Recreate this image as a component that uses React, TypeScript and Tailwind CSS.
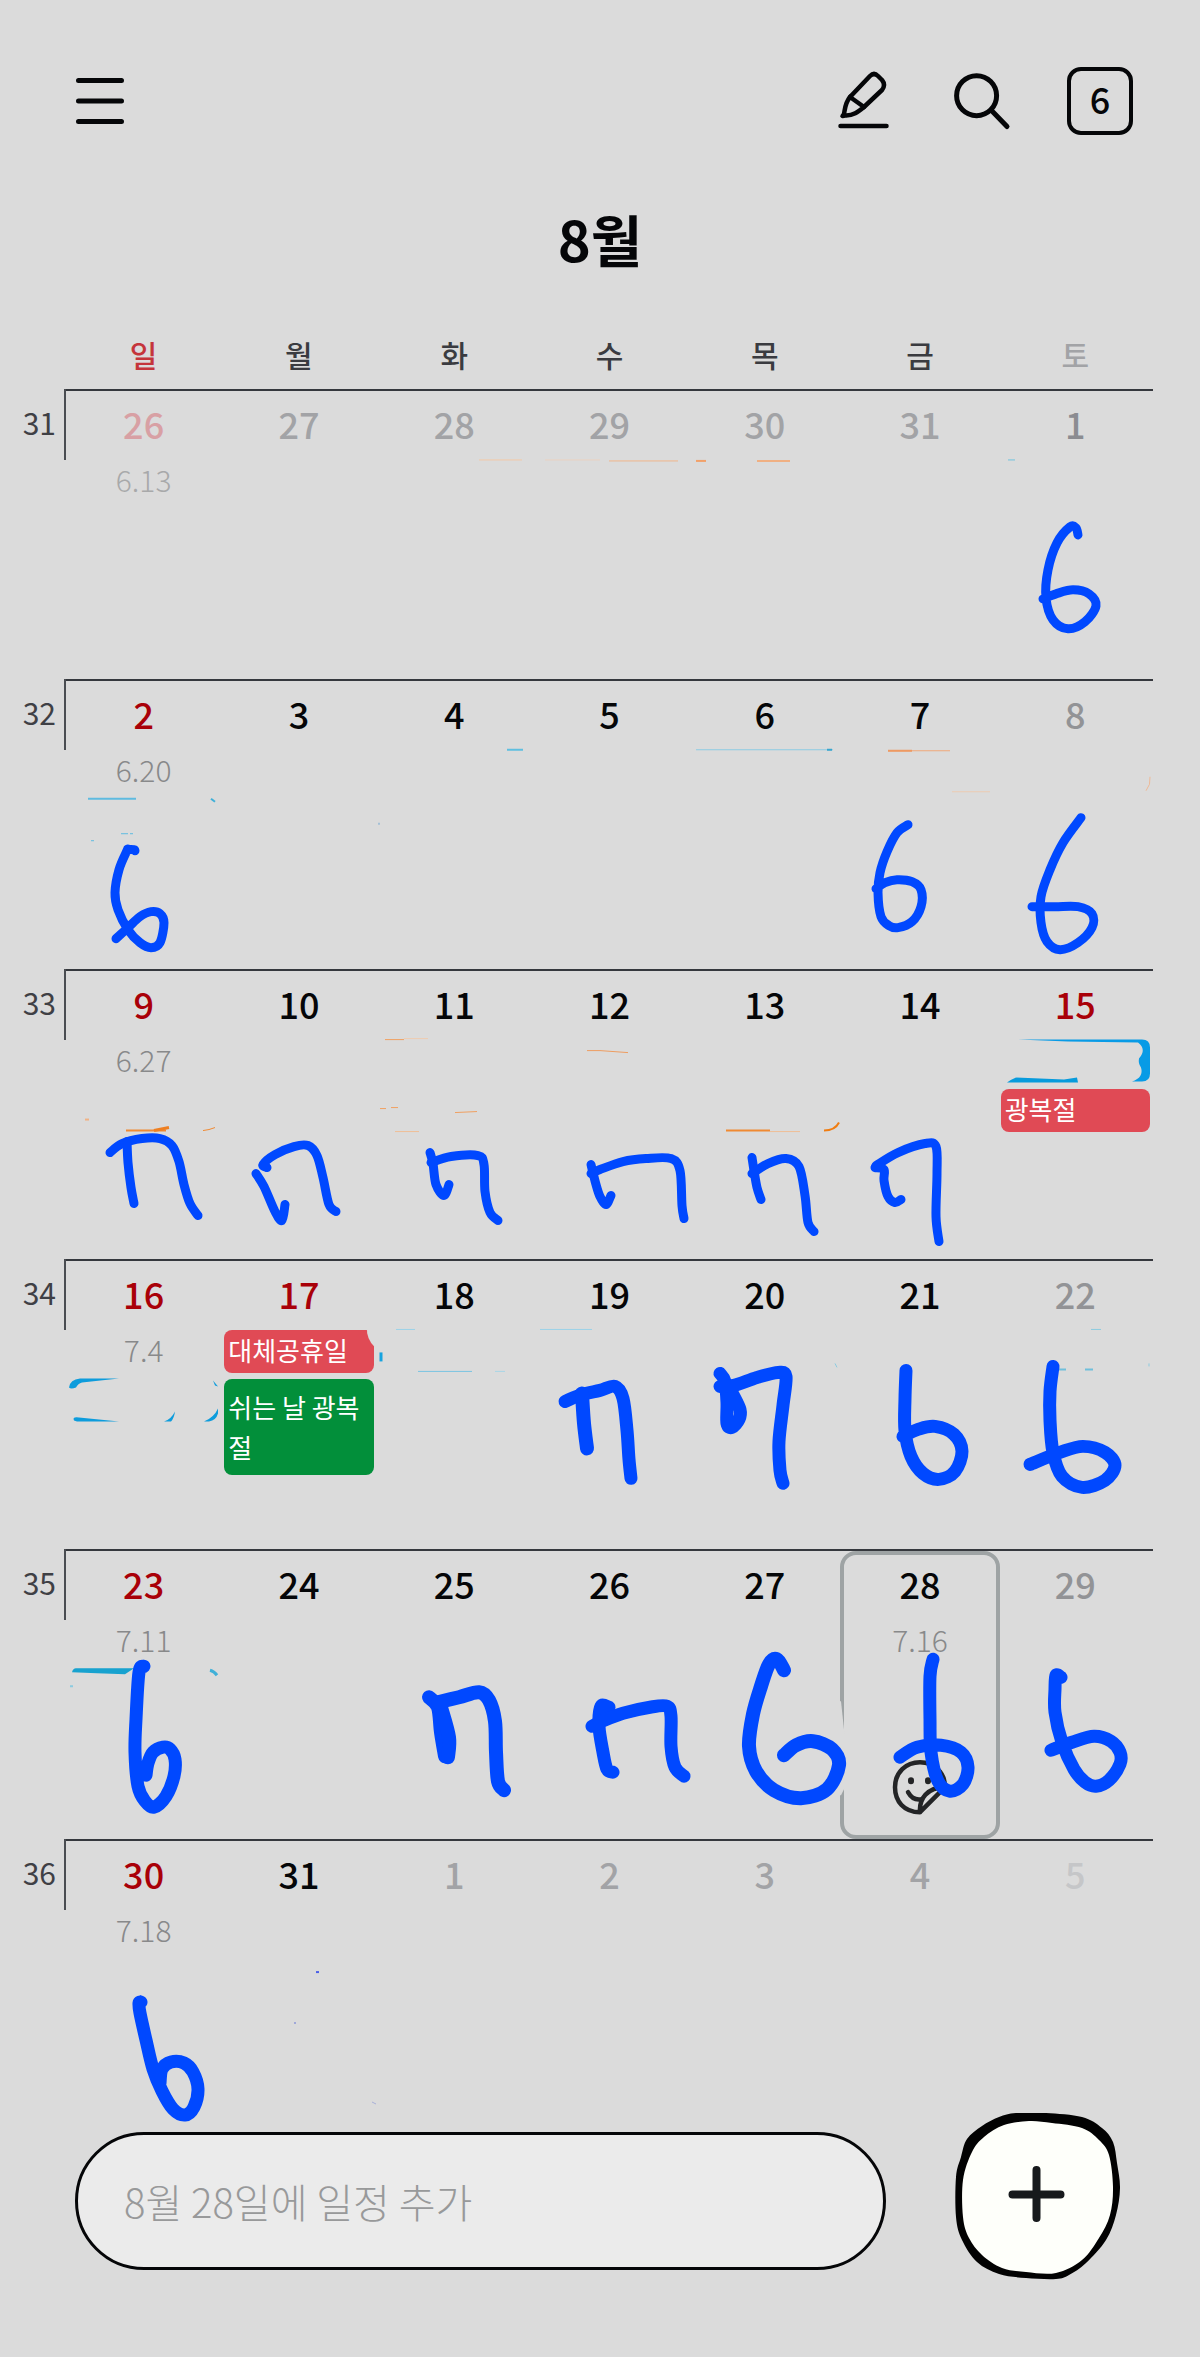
import clsx from "clsx";

type Point = [number, number];

type CalendarEvent = { title?: string; className?: string };

type Day = {
  date: number;
  tone: string;
  lunar?: string;
  lunarTone?: string;
  selected?: boolean;
  events?: CalendarEvent[];
};

type Week = { week: number; days: Day[] };

const BLACK = "text-[#050608]";
const RED = "text-[#a90008]";
const SATURDAY = "text-[#929396]";
const OTHER = "text-[#a2a3a6]";
const LUNAR = "text-[#88898a]";

const weekdays = [
  { name: "일", tone: "text-[#c5353b]" },
  { name: "월", tone: "text-[#3a3b40]" },
  { name: "화", tone: "text-[#3a3b40]" },
  { name: "수", tone: "text-[#3a3b40]" },
  { name: "목", tone: "text-[#3a3b40]" },
  { name: "금", tone: "text-[#3a3b40]" },
  { name: "토", tone: "text-[#a2a3a6]" },
];

const weeks: Week[] = [
  {
    week: 31,
    days: [
      { date: 26, tone: "text-[#d8a0a4]", lunar: "6.13", lunarTone: "text-[#a8a9aa]" },
      { date: 27, tone: OTHER },
      { date: 28, tone: OTHER },
      { date: 29, tone: OTHER },
      { date: 30, tone: OTHER },
      { date: 31, tone: OTHER },
      { date: 1, tone: "text-[#8b8c91]" },
    ],
  },
  {
    week: 32,
    days: [
      { date: 2, tone: RED, lunar: "6.20" },
      { date: 3, tone: BLACK },
      { date: 4, tone: BLACK },
      { date: 5, tone: BLACK },
      { date: 6, tone: BLACK },
      { date: 7, tone: BLACK },
      { date: 8, tone: SATURDAY },
    ],
  },
  {
    week: 33,
    days: [
      { date: 9, tone: RED, lunar: "6.27" },
      { date: 10, tone: BLACK },
      { date: 11, tone: BLACK },
      { date: 12, tone: BLACK },
      { date: 13, tone: BLACK },
      { date: 14, tone: BLACK },
      { date: 15, tone: RED, events: [{}, { title: "광복절", className: "bg-[#e04a55]" }] },
    ],
  },
  {
    week: 34,
    days: [
      { date: 16, tone: RED, lunar: "7.4" },
      {
        date: 17,
        tone: RED,
        events: [
          { title: "대체공휴일", className: "bg-[#e04a55]" },
          { title: "쉬는 날 광복절", className: "bg-[#028f3a] py-2" },
        ],
      },
      { date: 18, tone: BLACK },
      { date: 19, tone: BLACK },
      { date: 20, tone: BLACK },
      { date: 21, tone: BLACK },
      { date: 22, tone: SATURDAY },
    ],
  },
  {
    week: 35,
    days: [
      { date: 23, tone: RED, lunar: "7.11" },
      { date: 24, tone: BLACK },
      { date: 25, tone: BLACK },
      { date: 26, tone: BLACK },
      { date: 27, tone: BLACK },
      { date: 28, tone: BLACK, lunar: "7.16", selected: true },
      { date: 29, tone: SATURDAY },
    ],
  },
  {
    week: 36,
    days: [
      { date: 30, tone: RED, lunar: "7.18" },
      { date: 31, tone: BLACK },
      { date: 1, tone: OTHER },
      { date: 2, tone: OTHER },
      { date: 3, tone: OTHER },
      { date: 4, tone: OTHER },
      { date: 5, tone: "text-[#c5c6c8]" },
    ],
  },
];

// pen strokes, one entry per stroke
const ink: { w: number; p: Point[] }[] = [
  // 1
  { w: 9, p: [[1078, 535], [1076, 528], [1070, 527], [1057, 543], [1048, 570], [1046, 598], [1053, 620], [1068, 629], [1085, 622], [1096, 606], [1089, 594], [1073, 590], [1056, 594], [1043, 599]] },
  // 2
  { w: 9, p: [[135, 851], [134, 850], [128, 850], [127, 851], [119, 870], [115, 893], [118, 910], [128, 930], [140, 943], [151, 948], [160, 943], [164, 923], [160, 914], [151, 912], [140, 917], [128, 928], [116, 939]] },
  // 7
  { w: 9, p: [[908, 825], [897, 833], [887, 852], [880, 873], [878, 893], [881, 917], [889, 926], [898, 928], [912, 922], [921, 907], [921, 890], [912, 882], [897, 880], [885, 883], [876, 889]] },
  // 8
  { w: 9, p: [[1081, 818], [1063, 843], [1050, 870], [1041, 897], [1041, 923], [1047, 942], [1060, 950], [1078, 943], [1092, 928], [1092, 914], [1078, 907], [1055, 907], [1032, 907]] },
  // 9
  { w: 9, p: [[110, 1153], [122, 1144], [142, 1139], [160, 1139], [172, 1146], [179, 1162], [184, 1185], [190, 1204], [198, 1216]] },
  { w: 9, p: [[127, 1142], [128, 1163], [131, 1188], [134, 1204]] },
  // 10
  { w: 9, p: [[267, 1168], [263, 1165], [275, 1155], [294, 1147], [308, 1146], [317, 1156], [323, 1178], [329, 1205], [336, 1212]] },
  { w: 9, p: [[256, 1174], [264, 1187], [275, 1212], [282, 1221], [285, 1205]] },
  // 11
  { w: 9, p: [[430, 1153], [433, 1164], [436, 1185], [444, 1196], [449, 1185]] },
  { w: 9, p: [[431, 1163], [451, 1157], [478, 1156], [484, 1165], [485, 1192], [490, 1213], [498, 1221]] },
  // 12
  { w: 9, p: [[591, 1165], [596, 1185], [600, 1197], [606, 1205], [611, 1196]] },
  { w: 9, p: [[591, 1174], [600, 1170], [623, 1162], [646, 1159], [671, 1159], [680, 1171], [682, 1206], [684, 1219]] },
  // 13
  { w: 9, p: [[752, 1158], [754, 1171], [757, 1188], [761, 1200]] },
  { w: 9, p: [[752, 1174], [768, 1164], [786, 1159], [799, 1167], [805, 1196], [808, 1223], [814, 1232]] },
  // 14
  { w: 9, p: [[876, 1166], [898, 1153], [925, 1144], [936, 1147], [937, 1174], [936, 1217], [939, 1242]] },
  { w: 9, p: [[875, 1168], [884, 1170], [884, 1181], [888, 1197], [895, 1203], [901, 1200]] },
  // 19
  { w: 13, p: [[565, 1402], [582, 1395], [600, 1391], [615, 1387], [623, 1399], [627, 1431], [629, 1460], [631, 1479]] },
  { w: 14, p: [[582, 1394], [584, 1424], [587, 1449]] },
  // 20
  { w: 13, p: [[720, 1374], [725, 1382], [727, 1403], [727, 1424], [732, 1428], [739, 1420], [740, 1410], [733, 1395]] },
  { w: 13, p: [[720, 1387], [734, 1386], [757, 1378], [778, 1373], [786, 1377], [783, 1406], [779, 1442], [780, 1471], [783, 1484]] },
  // 21
  { w: 13, p: [[906, 1371], [905, 1399], [905, 1431], [911, 1457], [923, 1474], [939, 1480], [955, 1472], [962, 1452], [954, 1435], [935, 1427], [918, 1430], [903, 1437]] },
  // 22
  { w: 13, p: [[1053, 1367], [1050, 1392], [1050, 1421], [1053, 1453], [1062, 1477], [1082, 1488], [1105, 1481], [1115, 1466], [1105, 1453], [1083, 1447], [1060, 1453], [1030, 1465]] },
  // 23
  { w: 13, p: [[144, 1667], [139, 1673], [136, 1720], [135, 1753], [138, 1787], [145, 1802], [154, 1808], [166, 1797], [174, 1777], [175, 1760], [170, 1750], [163, 1748], [153, 1753], [148, 1764], [146, 1776]] },
  // 25
  { w: 14, p: [[429, 1698], [438, 1708], [441, 1733], [445, 1757]] },
  { w: 14, p: [[441, 1708], [449, 1738], [448, 1758]] },
  { w: 14, p: [[438, 1703], [459, 1698], [479, 1693], [489, 1701], [495, 1722], [496, 1753], [498, 1782], [504, 1791]] },
  // 26
  { w: 13, p: [[609, 1708], [601, 1707], [599, 1727], [603, 1753], [607, 1770], [613, 1773]] },
  { w: 13, p: [[592, 1727], [602, 1722], [623, 1714], [650, 1708], [667, 1707], [671, 1717], [671, 1747], [675, 1768], [684, 1777]] },
  // 27
  { w: 14, p: [[784, 1671], [777, 1660], [769, 1665], [761, 1687], [753, 1715], [749, 1747], [756, 1772], [774, 1791], [801, 1799], [827, 1790], [839, 1766], [832, 1750], [813, 1742], [796, 1746], [784, 1756]] },
  // 28
  { w: 13, p: [[933, 1660], [930, 1677], [930, 1720], [931, 1753], [938, 1782], [950, 1792], [963, 1785], [968, 1768], [961, 1753], [941, 1746], [917, 1748], [900, 1758]] },
  // 29
  { w: 13, p: [[1061, 1678], [1056, 1676], [1055, 1690], [1055, 1713], [1062, 1743], [1074, 1770], [1085, 1783], [1096, 1787], [1109, 1781], [1120, 1765], [1120, 1753], [1111, 1742], [1094, 1737], [1072, 1743], [1051, 1751]] },
  // 30
  { w: 13, p: [[141, 2003], [139, 2004], [140, 2014], [146, 2041], [153, 2070], [162, 2092], [173, 2110], [185, 2116], [194, 2108], [198, 2090], [193, 2073], [184, 2064], [171, 2063], [162, 2070], [160, 2084]] },
];

// faint bits left where the eraser missed
const scraps: { d: string; c: string; w: number }[] = [
  { d: "M479 460H522", c: "#f3c8a6", w: 1 },
  { d: "M545 460H600", c: "#ead2c0", w: 1 },
  { d: "M609 461H678", c: "#f0b58a", w: 1 },
  { d: "M696 461H706", c: "#f2a169", w: 2 },
  { d: "M757 461H790", c: "#f0b083", w: 2 },
  { d: "M1008 460H1015", c: "#6fc3de", w: 1 },
  { d: "M507 750H523", c: "#5fbfe0", w: 2 },
  { d: "M696 750H833", c: "#8ccbe3", w: 1 },
  { d: "M827 750H832", c: "#3aa5cd", w: 2 },
  { d: "M888 751H950", c: "#f0a878", w: 1 },
  { d: "M888 751H912", c: "#ee9a63", w: 2 },
  { d: "M952 792H990", c: "#eccbb2", w: 1 },
  { d: "M1150 777q1 8-4 14", c: "#eeb996", w: 1 },
  { d: "M88 799H136", c: "#5fbbe0", w: 2 },
  { d: "M211 799l4 3", c: "#3fb0d8", w: 2 },
  { d: "M121 834H128M130 834H133", c: "#5fbbe0", w: 1 },
  { d: "M91 841H94", c: "#5fbbe0", w: 1 },
  { d: "M379 823v2", c: "#a4c0d6", w: 2 },
  { d: "M385 1040H404", c: "#f0a05f", w: 1 },
  { d: "M404 1039H428", c: "#eecbb0", w: 1 },
  { d: "M587 1051H600L628 1053", c: "#ee9d60", w: 1 },
  { d: "M380 1109h6M391 1108h7", c: "#f0a060", w: 1 },
  { d: "M455 1113l22-1", c: "#f0a060", w: 1 },
  { d: "M395 1132h24", c: "#f0bf98", w: 1 },
  { d: "M85 1120h4", c: "#f0b285", w: 2 },
  { d: "M126 1131H166", c: "#f08a32", w: 2 },
  { d: "M154 1131l15-3", c: "#ee7f22", w: 3 },
  { d: "M203 1131l6-1 6-2", c: "#f08a32", w: 1 },
  { d: "M726 1131H770", c: "#f08a32", w: 2 },
  { d: "M770 1132H800", c: "#f0bf98", w: 1 },
  { d: "M824 1131q11 0 15-8", c: "#f07d12", w: 2 },
  { d: "M381 1353v9", c: "#16a3df", w: 3 },
  { d: "M396 1330H415M540 1330H592", c: "#9ad2e8", w: 1 },
  { d: "M418 1372H472", c: "#78c4e2", w: 1 },
  { d: "M495 1372H505", c: "#a9d6e6", w: 1 },
  { d: "M835 1364l2 4", c: "#8ccbe0", w: 1 },
  { d: "M1059 1370h7M1085 1370h8", c: "#6fbfdc", w: 2 },
  { d: "M1091 1330h10M1149 1364v3", c: "#8ccbe0", w: 1 },
  { d: "M210 1671q4 1 7 5", c: "#3fb0d8", w: 3 },
  { d: "M70 1687h3", c: "#8ccbe0", w: 2 },
  { d: "M316 1973h3", c: "#4a5fe8", w: 2 },
  { d: "M295 2023v2", c: "#a0a8d8", w: 2 },
  { d: "M372 2103l4 2", c: "#a8b0d8", w: 1 },
];

const addOutline: Point[] = [[61, 0], [91, 0], [127, 4], [147, 15], [158, 29], [162, 50], [165, 75], [161, 102], [151, 127], [131, 150], [114, 162], [101, 166], [71, 165], [44, 161], [22, 149], [7, 127], [1, 104], [1, 64], [6, 44], [12, 26], [27, 13], [44, 4]];
const addInside: Point[] = [[74, 8], [97, 10], [127, 15], [144, 27], [154, 42], [158, 74], [155, 102], [144, 125], [127, 147], [101, 160], [71, 159], [47, 155], [27, 142], [14, 125], [8, 104], [8, 67], [17, 39], [29, 24], [49, 12]];

// Catmull-Rom through the points, written as cubic beziers
function smooth(points: Point[], closed = false) {
  const n = points.length;
  const at = (i: number) => (closed ? points[(i + n) % n] : points[Math.max(0, Math.min(n - 1, i))]);
  let d = `M${points[0][0]} ${points[0][1]}`;
  for (let i = 0; i < (closed ? n : n - 1); i++) {
    const [a, b, c, e] = [at(i - 1), at(i), at(i + 1), at(i + 2)];
    d += `C${b[0] + (c[0] - a[0]) / 6} ${b[1] + (c[1] - a[1]) / 6} ${c[0] - (e[0] - b[0]) / 6} ${c[1] - (e[1] - b[1]) / 6} ${c[0]} ${c[1]}`;
  }
  return closed ? d + "Z" : d;
}

function Header() {
  return (
    <header className="flex items-center justify-between pt-[67px] pr-[67px] pl-[76px]">
      <button aria-label="메뉴">
        <svg width="48" height="68" viewBox="0 0 48 68" fill="none" stroke="#050608" strokeWidth="5" strokeLinecap="round">
          <path d="M2.5 13.5h43M2.5 34h43M2.5 54.5h43" />
        </svg>
      </button>
      <div className="flex items-center gap-14">
        <button aria-label="손글씨">
          <svg width="58" height="68" viewBox="0 0 58 68" fill="none" stroke="#050608" strokeWidth="4.5" strokeLinecap="round" strokeLinejoin="round">
            <path d="M13 30 33 9q4-4 8 0l4 4q4 5 0 10L27 40" />
            <path d="M13 30C8 36 8 42 7 47L5.5 49 8 48.5C16 49 21 45 27 40L13 30" />
            <path d="M3.5 59h46" />
          </svg>
        </button>
        <button aria-label="검색">
          <svg width="60" height="68" viewBox="0 0 60 68" fill="none" stroke="#050608" strokeWidth="5" strokeLinecap="round">
            <circle cx="25.6" cy="28.7" r="20" />
            <path d="M41 44l15 15.5" />
          </svg>
        </button>
        <button aria-label="오늘" className="flex h-[68px] w-[66px] items-center justify-center rounded-[14px] border-4 border-[#050608] pb-1.5 text-4xl font-medium">6</button>
      </div>
    </header>
  );
}

function DayCell({ day }: { day: Day }) {
  return (
    <td className="relative border-t-2 border-[#35383d] p-0 align-top">
      {day.selected && <div className="absolute -inset-x-[2px] inset-y-0 rounded-2xl border-4 border-[#9ea3a4]" />}
      <div className={clsx("flex h-[69px] items-center justify-center pb-1.5 text-4xl font-medium", day.tone)}>{day.date}</div>
      {day.lunar && <div className={clsx("text-center text-[30px] leading-[38px] font-light", day.lunarTone ?? LUNAR)}>{day.lunar}</div>}
      {day.events && (
        <ul className="flex flex-col gap-[6px] px-[3px]">
          {day.events.map((event, i) => (
            <li key={i} className={clsx("min-h-[43px] rounded-lg px-1 text-[26px] leading-10 break-all text-white", event.className)}>{event.title}</li>
          ))}
        </ul>
      )}
    </td>
  );
}

function PenLayer() {
  return (
    <svg className="pointer-events-none absolute inset-0 h-full w-full" viewBox="0 320 1200 1810" preserveAspectRatio="none" fill="none" strokeLinecap="round" strokeLinejoin="round" aria-hidden="true">
      <g strokeLinecap="butt">
        {scraps.map((s, i) => <path key={i} d={s.d} stroke={s.c} strokeWidth={s.w} />)}
      </g>
      {/* what is left of the erased blue events */}
      <path fill="#089be6" d="M1018 1040H1142q8 0 8 8V1074q0 8-8 8H1132q12-4 9-14-3-4-2-9 8-9-1-16L1068 1042Z" />
      <path fill="#089bdc" d="M1007 1083q4-3 9-5l48 2 13-2 1 5Z" />
      <g fill="#0d9cdc">
        <path d="M69 1388q1-8 11-9h39l-37 4q-4 1-6 5-5 2-7 0Z" />
        <path d="M74 1421q-2-4 5-3l40 4H77Z" />
        <path d="M164 1422q7-2 11-10-1 7-4 10Z" />
        <path d="M204 1422q10-4 14-13v5q-2 7-9 8Z" />
        <path d="M213 1381l5 6-3-1Z" />
      </g>
      <path fill="#18a2cf" d="M72 1673q1-4 4-4h58l-9 6-28-1Z" />
      {/* eraser marks over the holiday and the selected day */}
      <path fill="#dbdbdb" d="M367 1328h8v20q-9-9-8-20Z" />
      <path fill="#dbdbdb" d="M838 1702h3l4 38v48l-4 8h-3Z" />
      <g stroke="#232426" strokeWidth="4.5">
        <path d="M920 1813C904 1813 895 1802 895 1788C895 1773 906 1763 920 1763C934 1763 945 1773 945 1788L920 1813C919 1800 927 1788 945 1788" />
        <path d="M908 1793q5 9 14 7" />
        <path d="M911 1781v1M928 1781v1" strokeWidth="6" />
      </g>
      {ink.map((s, i) => <path key={i} d={smooth(s.p)} stroke="#0048ff" strokeWidth={s.w} />)}
    </svg>
  );
}

export default function App() {
  return (
    <div className="min-h-screen bg-[#dbdbdb] font-['Noto_Sans_CJK_KR',sans-serif] text-[#050608]">
      <Header />
      <h1 className="pt-[61px] pb-10 text-center text-[56px] leading-[84px] font-bold">8월</h1>
      <main className="relative pr-[47px]">
        <table className="w-full table-fixed border-separate border-spacing-0">
          <thead>
            <tr className="h-[69px] text-[30px]">
              <td className="w-[66px] p-0" />
              {weekdays.map((d) => <th key={d.name} scope="col" className={clsx("p-0 font-medium", d.tone)}>{d.name}</th>)}
            </tr>
          </thead>
          <tbody>
            {weeks.map((w) => (
              <tr key={w.week} className="h-[290px]">
                <th scope="row" className="p-0 align-top font-normal">
                  <div className="flex h-[71px] items-center justify-end border-r-2 border-[#4a4d52] pr-2 pb-1 text-[30px] text-[#3f4045]">{w.week}</div>
                </th>
                {w.days.map((day) => <DayCell key={day.date} day={day} />)}
              </tr>
            ))}
          </tbody>
        </table>
        <PenLayer />
      </main>
      <form className="-mt-4 flex items-center gap-[69px] pr-[79px] pb-12 pl-[75px]" onSubmit={(e) => e.preventDefault()}>
        <input
          type="text"
          aria-label="일정 추가"
          placeholder="8월 28일에 일정 추가"
          className="h-[138px] min-w-0 flex-1 rounded-full border-[3px] border-[#050608] bg-[#ebebeb] px-[46px] text-[40px] font-light placeholder:text-[#98999a]"
        />
        <button aria-label="추가" className="shrink-0">
          <svg width="166" height="176" viewBox="0 0 166 176">
            <path d={smooth(addOutline, true)} fill="#020202" />
            <path d={smooth(addInside, true)} fill="#fefffa" />
            <path d="M57.5 81.500h48M81.500 57v48" stroke="#171a1c" strokeWidth="8" strokeLinecap="round" />
          </svg>
        </button>
      </form>
    </div>
  );
}
